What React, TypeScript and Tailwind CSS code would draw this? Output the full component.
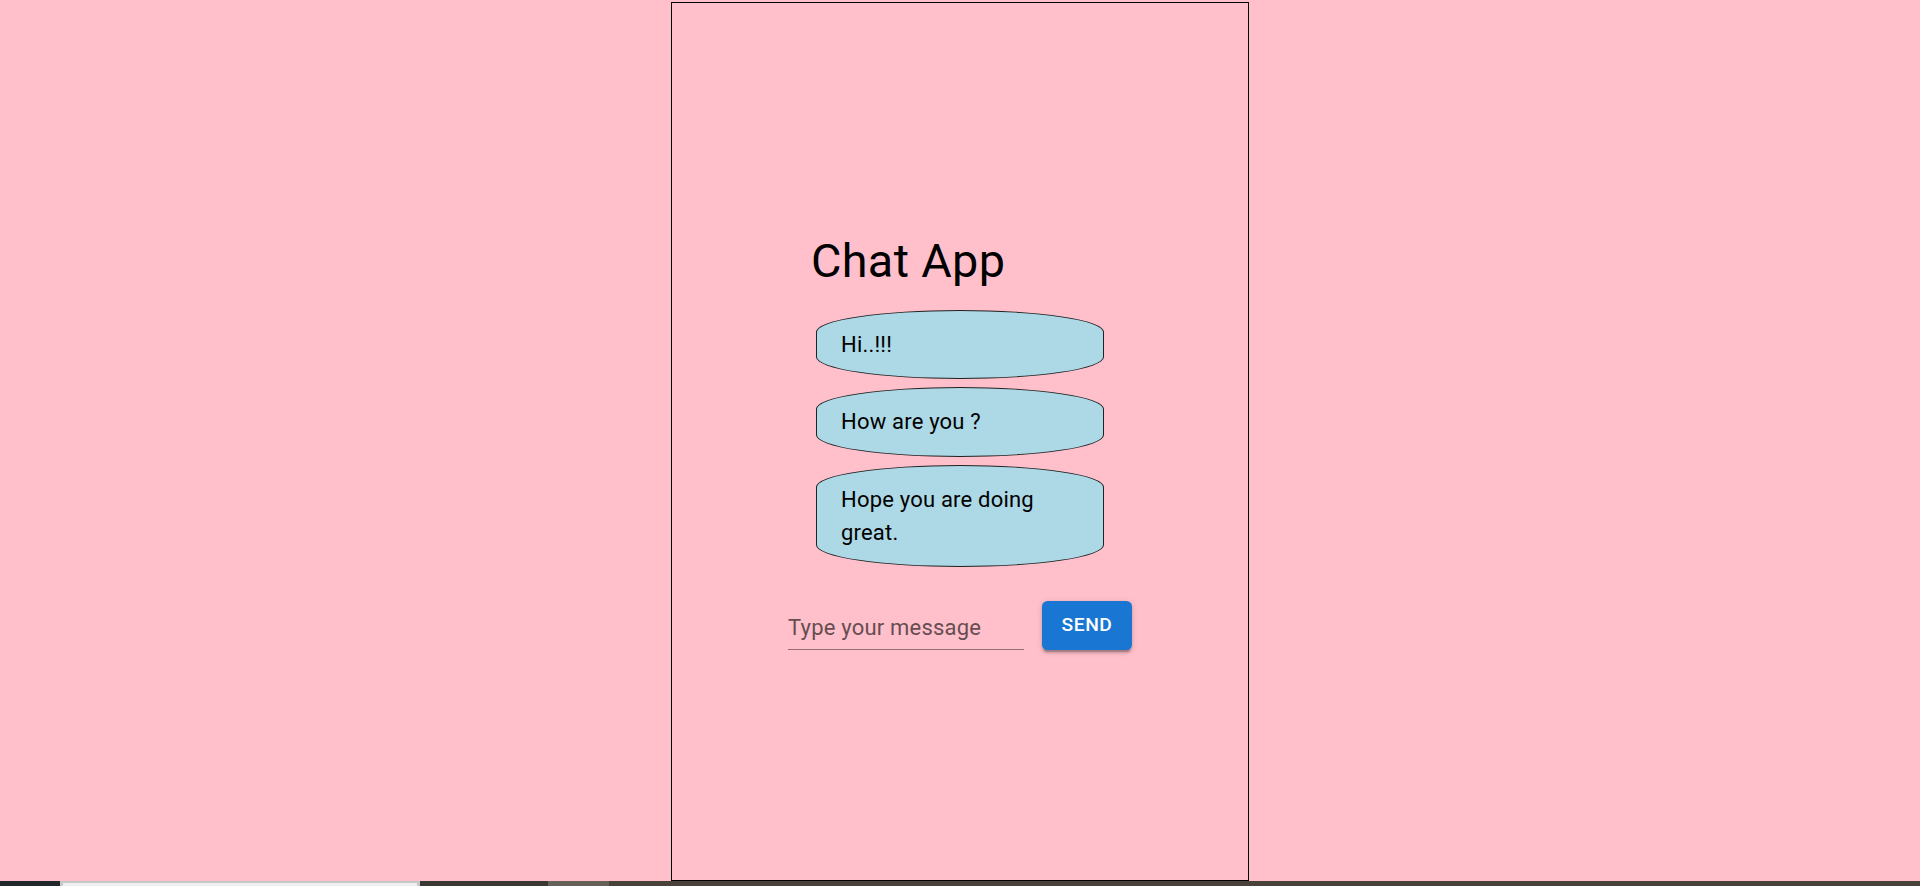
export default function App() {
  const messages = ['Hi..!!!', 'How are you ?', 'Hope you are doing great.']

  return (
    <div className="min-h-screen bg-[#ffc0cb] flex flex-col font-['Roboto',_'Liberation_Sans',_sans-serif] text-black">
      {/* Chat panel */}
      <div className="mx-auto mt-[2px] h-[879px] w-[578px] border border-black flex flex-col items-center justify-center">
        <div className="w-[302px]">
          <h1 className="pl-[2px] text-[46.75px] leading-[57.7px] tracking-[0.34px] font-normal">Chat App</h1>
          <div className="mt-[19px] px-[7px] flex flex-col gap-[8px]">
            {messages.map((msg) => (
              <div
                key={msg}
                className="bg-[#add8e6] border border-[#222] rounded-[50%/22px] pl-[24px] pr-[25px] py-[17.25px] text-[22px] leading-[33px] tracking-[0.2px]"
              >
                {msg}
              </div>
            ))}
          </div>
        </div>

        {/* Input row */}
        <div className="mt-[34px] flex items-end gap-[18px]">
          <input
            type="text"
            placeholder="Type your message"
            className="w-[236px] h-[45px] pt-[6.5px] pb-[5.9px] bg-transparent border-b border-[#946f76] outline-none text-[22px] placeholder:text-[#664d51] tracking-[0.2px]"
          />
          <button className="w-[90px] h-[49px] rounded-[5.5px] bg-[#1976d2] text-white text-[19.25px] font-medium tracking-[0.55px] uppercase shadow-[0px_4px_1.4px_-2.75px_rgba(0,0,0,0.2),0px_2.75px_2.75px_0px_rgba(0,0,0,0.14),0px_1.4px_6.9px_0px_rgba(0,0,0,0.12)]">
            Send
          </button>
        </div>
      </div>

      {/* Bottom strip */}
      <div className="h-[5px] flex">
        <div className="w-[60px] bg-[#22272b]" />
        <div className="w-[360px] bg-[#c8c8c8] pl-[3px] pr-[3px] pt-[2px]">
          <div className="h-full bg-[#f0f0f0]" />
        </div>
        <div className="w-[128px] bg-[#3a3832]" />
        <div className="w-[61px] bg-[#656058]" />
        <div className="flex-1 bg-[#48423a]" />
      </div>
    </div>
  )
}
